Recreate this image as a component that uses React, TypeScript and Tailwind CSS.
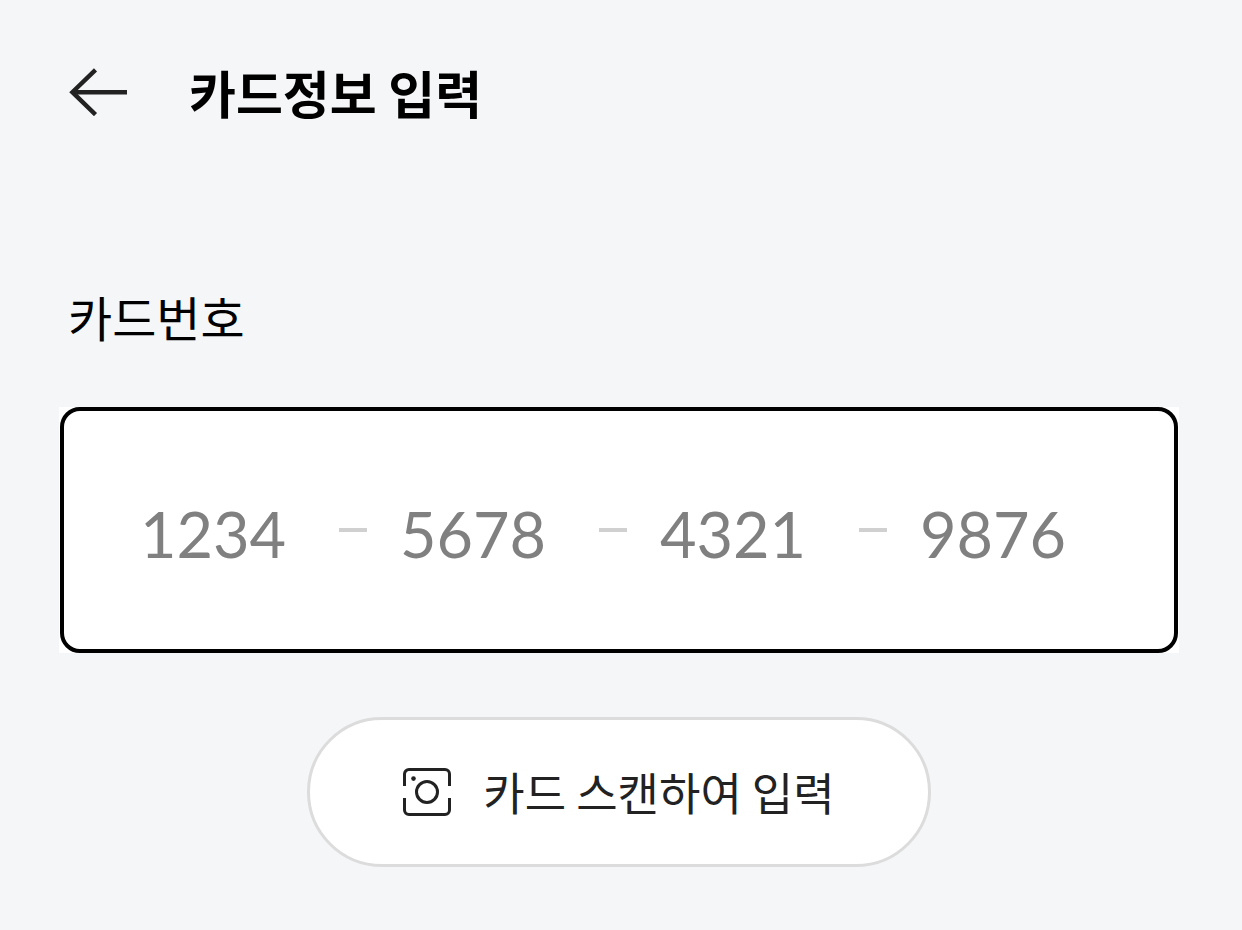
import React, { useState } from 'react';

const SAMPLE_GROUPS = ['1234', '5678', '4321', '9876'];

function BackArrow() {
  return (
    <svg width="58" height="48" viewBox="0 0 58 48" fill="none" stroke="#222222" strokeWidth={4.4} aria-hidden="true">
      <path d="M26.5 1.8L3.4 24.2l23.1 22.4" />
      <path d="M4 24.2h54" />
    </svg>
  );
}

function ScanIcon() {
  return (
    <svg width="48" height="48" viewBox="0 0 48 48" fill="none" stroke="#222222" strokeWidth={3} aria-hidden="true">
      <path d="M1.5 18V6A4.5 4.5 0 0 1 6 1.5h36A4.5 4.5 0 0 1 46.5 6v12" />
      <path d="M1.5 30v12A4.5 4.5 0 0 0 6 46.5h36a4.5 4.5 0 0 0 4.5-4.5V30" />
      <circle cx="24" cy="24" r="10.5" />
      <circle cx="10.5" cy="10.6" r="2.3" fill="#222222" stroke="none" />
    </svg>
  );
}

export default function App() {
  const [groups, setGroups] = useState(['', '', '', '']);

  const updateGroup = (idx: number, value: string) => {
    const digits = value.replace(/\D/g, '').slice(0, 4);
    setGroups(groups.map((g, i) => (i === idx ? digits : g)));
  };

  return (
    <div className="min-h-screen bg-[#f5f6f8] text-black font-['Noto_Sans_CJK_KR',sans-serif] pt-[52px] pb-16">

      {/* --- HEADER --- */}
      <header className="flex items-center h-20 pl-[69px] gap-[62px]">
        <button type="button" aria-label="뒤로">
          <BackArrow />
        </button>
        <h1 className="text-[51px] leading-20 font-bold">카드정보 입력</h1>
      </header>

      <main className="pl-[59px] pr-[63px] pt-36">
        {/* --- CARD NUMBER --- */}
        <label htmlFor="card-0" className="block pl-[9px] text-5xl leading-20">카드번호</label>

        <div className="bg-white px-px mt-[51px]">
          <div className="flex items-center h-[246px] border-4 border-black rounded-[20px] bg-white pl-[76px] pr-[55px]">
            {SAMPLE_GROUPS.map((sample, idx) => (
              <React.Fragment key={sample}>
                {idx > 0 && <span className="w-7 h-1 mr-[33px] shrink-0 bg-[#d0d0d0]" />}
                <input
                  id={`card-${idx}`}
                  aria-label={`카드번호 ${idx + 1}`}
                  inputMode="numeric"
                  maxLength={4}
                  placeholder={sample}
                  value={groups[idx]}
                  onChange={(e) => updateGroup(idx, e.target.value)}
                  className="flex-1 min-w-0 h-24 pt-[7px] font-['Lato',sans-serif] text-[63px] outline-none placeholder:text-[#808080] placeholder:opacity-100"
                />
              </React.Fragment>
            ))}
          </div>
        </div>

        {/* --- SCAN BUTTON --- */}
        <div className="flex justify-center mt-16">
          <button
            type="button"
            className="flex items-center h-[150px] px-[93px] gap-8 rounded-full border-3 border-[#dcdcdc] bg-white text-[#222222] text-[45px]"
          >
            <ScanIcon />
            <span>카드 스캔하여 입력</span>
          </button>
        </div>
      </main>

    </div>
  );
}
